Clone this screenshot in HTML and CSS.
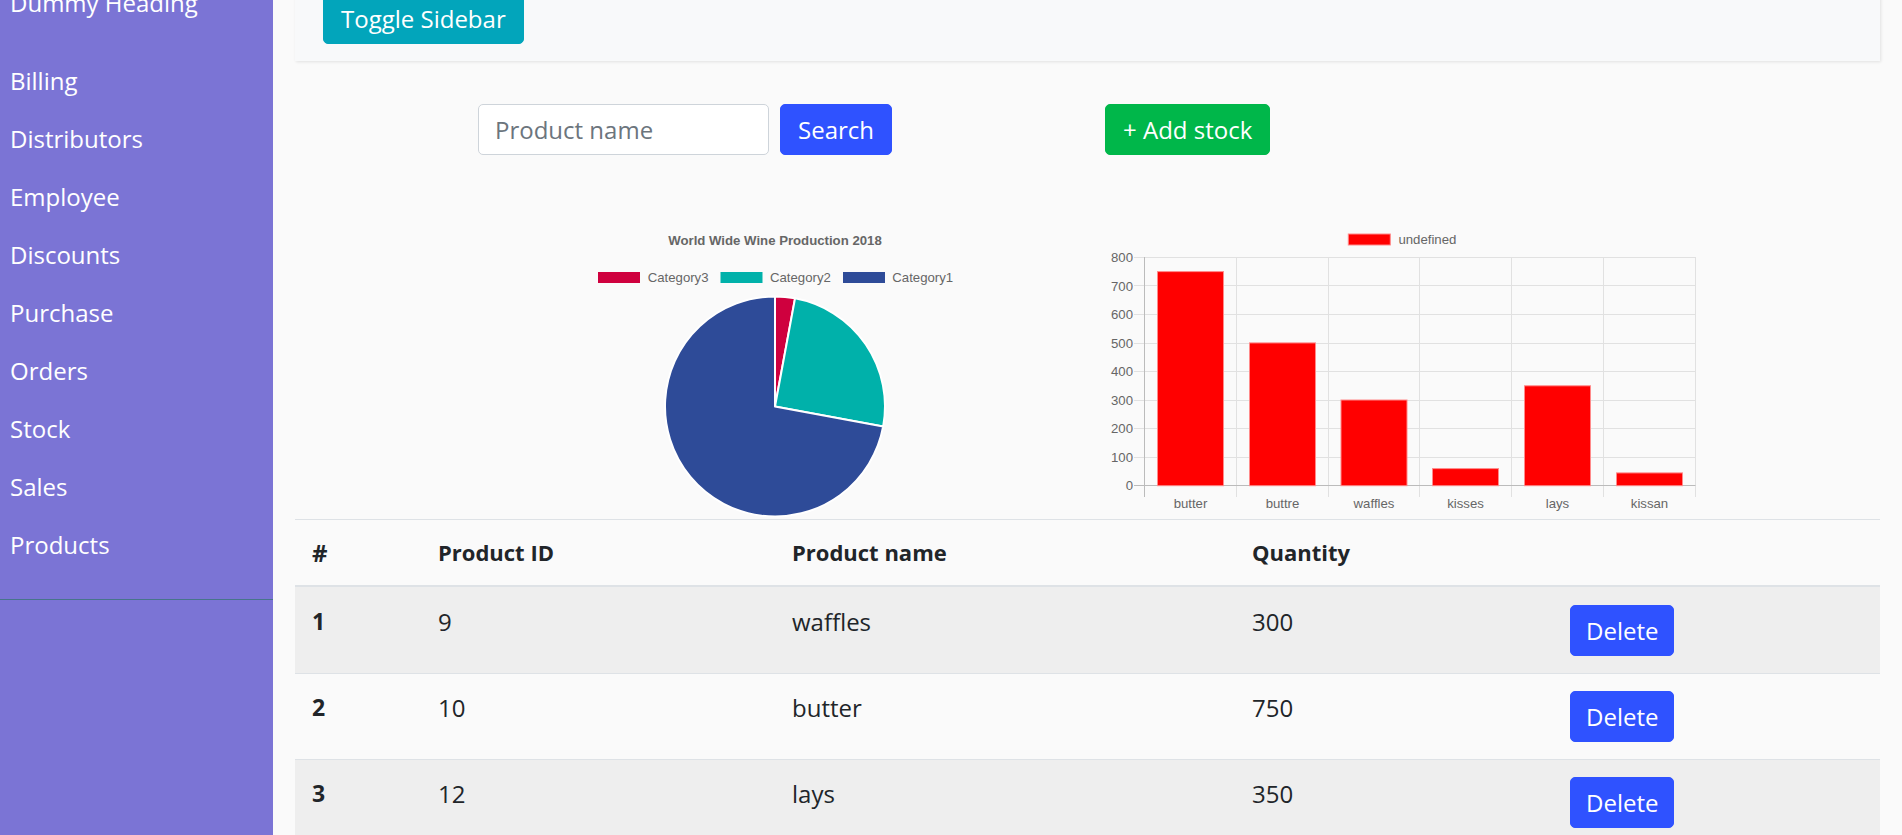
FILE: index.html
```html
<!DOCTYPE html>
<html>
<head>
<meta charset="utf-8">
<title>Stock</title>
<link rel="stylesheet" href="styles.css">
</head>
<body>
<div class="page">
  <nav class="sidebar">
    <div class="sidebar-header"><h3>Dummy Heading</h3></div>
    <ul class="components">
      <li><a>Billing</a></li>
      <li><a>Distributors</a></li>
      <li><a>Employee</a></li>
      <li><a>Discounts</a></li>
      <li><a>Purchase</a></li>
      <li><a>Orders</a></li>
      <li><a>Stock</a></li>
      <li><a>Sales</a></li>
      <li><a>Products</a></li>
    </ul>
  </nav>
  <div class="content">
    <nav class="topbar">
      <button class="btn btn-info">Toggle Sidebar</button>
    </nav>
    <div class="search-row">
      <input class="form-control" type="text" placeholder="Product name">
      <button class="btn btn-primary btn-search">Search</button>
      <button class="btn btn-success btn-add">+ Add stock</button>
    </div>
    <div class="charts">
      <svg class="pie-chart" width="440" height="300" viewBox="555 219 440 300">
        <text class="chart-title" x="775" y="245" text-anchor="middle">World Wide Wine Production 2018</text>
        <rect x="598" y="272" width="42" height="11" fill="#cf003e"/>
        <text class="chart-label" x="647.7" y="281.5">Category3</text>
        <rect x="720.5" y="272" width="42" height="11" fill="#00b1aa"/>
        <text class="chart-label" x="770" y="281.5">Category2</text>
        <rect x="843" y="272" width="42" height="11" fill="#2e4b98"/>
        <text class="chart-label" x="892.3" y="281.5">Category1</text>
        <g stroke="#ffffff" stroke-width="2" stroke-linejoin="round">
          <path d="M775,406.5 L775,296.5 A110,110 0 0,1 795.04,298.34 Z" fill="#cf003e"/>
          <path d="M775,406.5 L795.04,298.34 A110,110 0 0,1 883.16,426.54 Z" fill="#00b1aa"/>
          <path d="M775,406.5 L883.16,426.54 A110,110 0 1,1 775,296.5 Z" fill="#2e4b98"/>
        </g>
      </svg>
      <svg class="bar-chart" width="620" height="300" viewBox="1095 219 620 300">
        <rect x="1348.3" y="234" width="42" height="11" fill="#ff0000" stroke="#ff8a8a" stroke-width="1"/>
        <text class="chart-label" x="1398.4" y="243.5">undefined</text>
        <g stroke="#e1e1e1" stroke-width="1">
          <line x1="1134" y1="457.5" x2="1695.5" y2="457.5"/>
          <line x1="1134" y1="428.5" x2="1695.5" y2="428.5"/>
          <line x1="1134" y1="400.5" x2="1695.5" y2="400.5"/>
          <line x1="1134" y1="371.5" x2="1695.5" y2="371.5"/>
          <line x1="1134" y1="343.5" x2="1695.5" y2="343.5"/>
          <line x1="1134" y1="314.5" x2="1695.5" y2="314.5"/>
          <line x1="1134" y1="285.5" x2="1695.5" y2="285.5"/>
          <line x1="1134" y1="257.5" x2="1695.5" y2="257.5"/>
          <line x1="1236.5" y1="257" x2="1236.5" y2="497"/>
          <line x1="1328.5" y1="257" x2="1328.5" y2="497"/>
          <line x1="1419.5" y1="257" x2="1419.5" y2="497"/>
          <line x1="1511.5" y1="257" x2="1511.5" y2="497"/>
          <line x1="1603.5" y1="257" x2="1603.5" y2="497"/>
          <line x1="1695.5" y1="257" x2="1695.5" y2="497"/>
        </g>
        <g stroke="#bbbbbb" stroke-width="1">
          <line x1="1144.5" y1="257" x2="1144.5" y2="497"/>
          <line x1="1134" y1="485.5" x2="1695.5" y2="485.5"/>
        </g>
        <g class="chart-label" text-anchor="end">
          <text x="1133" y="490.4">0</text>
          <text x="1133" y="461.8">100</text>
          <text x="1133" y="433.3">200</text>
          <text x="1133" y="404.7">300</text>
          <text x="1133" y="376.2">400</text>
          <text x="1133" y="347.6">500</text>
          <text x="1133" y="319.1">600</text>
          <text x="1133" y="290.5">700</text>
          <text x="1133" y="262">800</text>
        </g>
        <g fill="#ff0000" stroke="#ff8a8a" stroke-width="1">
          <rect x="1157.5" y="271.6" width="66" height="214.1"/>
          <rect x="1249.5" y="342.9" width="66" height="142.8"/>
          <rect x="1341" y="400" width="66" height="85.7"/>
          <rect x="1432.5" y="468.6" width="66" height="17.1"/>
          <rect x="1524.5" y="385.8" width="66" height="99.9"/>
          <rect x="1616.5" y="472.9" width="66" height="12.8"/>
        </g>
        <g class="chart-label" text-anchor="middle">
          <text x="1190.5" y="508">butter</text>
          <text x="1282.5" y="508">buttre</text>
          <text x="1374" y="508">waffles</text>
          <text x="1465.5" y="508">kisses</text>
          <text x="1557.5" y="508">lays</text>
          <text x="1649.5" y="508">kissan</text>
        </g>
      </svg>
    </div>
    <table class="table">
      <colgroup>
        <col class="c-num"><col class="c-id"><col class="c-name"><col class="c-qty"><col class="c-act">
      </colgroup>
      <thead>
        <tr><th>#</th><th>Product ID</th><th>Product name</th><th>Quantity</th><th></th></tr>
      </thead>
      <tbody>
        <tr><th class="row-head">1</th><td>9</td><td>waffles</td><td>300</td><td><button class="btn btn-primary btn-del">Delete</button></td></tr>
        <tr><th class="row-head">2</th><td>10</td><td>butter</td><td>750</td><td><button class="btn btn-primary btn-del">Delete</button></td></tr>
        <tr><th class="row-head">3</th><td>12</td><td>lays</td><td>350</td><td><button class="btn btn-primary btn-del">Delete</button></td></tr>
      </tbody>
    </table>
  </div>
</div>
</body>
</html>
```
FILE: styles.css
```css
html, body {
  margin: 0;
  padding: 0;
  overflow: hidden;
  background: #fafafa;
}

body {
  font-family: "Open Sans", "Noto Sans", sans-serif;
  font-size: 24px;
  color: #212529;
}

.page {
  display: flex;
  align-items: stretch;
  margin-top: -46px;
  min-height: 900px;
}

/* Sidebar */
.sidebar {
  width: 273px;
  flex: 0 0 273px;
  background: #7b74d5;
  color: #fff;
}

.sidebar-header {
  height: 76px;
  box-sizing: border-box;
  display: flex;
  align-items: flex-end;
  padding: 0 10px 12px;
}

.sidebar-header h3 {
  margin: 0;
  font-size: 24px;
  line-height: 30px;
  font-weight: 400;
}

.components {
  list-style: none;
  margin: 0;
  padding: 22px 0 25px;
  border-bottom: 1px solid #47748b;
}

.components a {
  display: block;
  padding: 11px 10px;
  font-size: 24px;
  line-height: 36px;
  color: #fff;
}

/* Content */
.content {
  flex: 1;
  padding: 22px 22px 0;
  min-width: 0;
}

.topbar {
  background: #f8f9fa;
  padding: 17px 28px;
  box-shadow: 1px 1px 3px rgba(0, 0, 0, 0.1);
}

.btn {
  font-family: "Open Sans", "Noto Sans", sans-serif;
  font-size: 24px;
  line-height: 33px;
  padding: 8px 17px;
  border: 1px solid transparent;
  border-radius: 5px;
  color: #fff;
  display: inline-flex;
  align-items: center;
  box-sizing: border-box;
  height: 51px;
  cursor: pointer;
}

.btn-info {
  background: #02a5bb;
  border-color: #02a5bb;
}

.btn-primary {
  background: #2f52ff;
  border-color: #2f52ff;
}

.btn-success {
  background: #00b74a;
  border-color: #00b74a;
}

.search-row {
  display: flex;
  align-items: center;
  margin-top: 43px;
  padding-left: 183px;
}

.form-control {
  width: 291px;
  height: 51px;
  box-sizing: border-box;
  padding: 8px 16px;
  font-family: "Open Sans", "Noto Sans", sans-serif;
  font-size: 24px;
  line-height: 33px;
  border: 1px solid #ced4da;
  border-radius: 5px;
  background: #fff;
  color: #495057;
}

.form-control::placeholder {
  color: #6c757d;
}

.btn-search {
  margin-left: 11px;
}

.btn-add {
  margin-left: 213px;
}

/* Charts */
.charts {
  display: flex;
  margin-top: 64px;
  height: 300px;
}

.charts svg {
  display: block;
  overflow: hidden;
}

.pie-chart {
  margin-left: 260px;
}

.bar-chart {
  margin-left: 100px;
}

.chart-title {
  font-family: "Liberation Sans", Arial, sans-serif;
  font-size: 13.2px;
  font-weight: bold;
  fill: #666;
}

.chart-label {
  font-family: "Liberation Sans", Arial, sans-serif;
  font-size: 13.2px;
  fill: #666;
}

/* Table */
.table {
  width: 1585px;
  border-collapse: separate;
  border-spacing: 0;
  table-layout: fixed;
}

.c-num { width: 126px; }
.c-id { width: 354px; }
.c-name { width: 460px; }
.c-qty { width: 318px; }
.c-act { width: 327px; }

.table thead th {
  text-align: left;
  font-size: 22px;
  font-weight: 700;
  line-height: 33px;
  padding: 16px 17px;
  border-top: 1px solid #dee2e6;
  border-bottom: 2px solid #dee2e6;
  vertical-align: bottom;
}

.table thead th:first-child {
  font-size: 24px;
}

.table tbody td,
.table tbody th {
  text-align: left;
  padding: 17px;
  line-height: 33px;
  border-top: 1px solid #dee2e6;
  vertical-align: top;
  font-weight: 400;
}

.table tbody .row-head {
  font-size: 23px;
  font-weight: 700;
}

.table tbody tr:first-child td,
.table tbody tr:first-child th {
  border-top: 0;
  padding-top: 18px;
}

.table tbody tr:nth-child(odd) {
  background: #eeeeee;
}

.btn-del {
  vertical-align: top;
  padding: 8px 15px;
}
```
